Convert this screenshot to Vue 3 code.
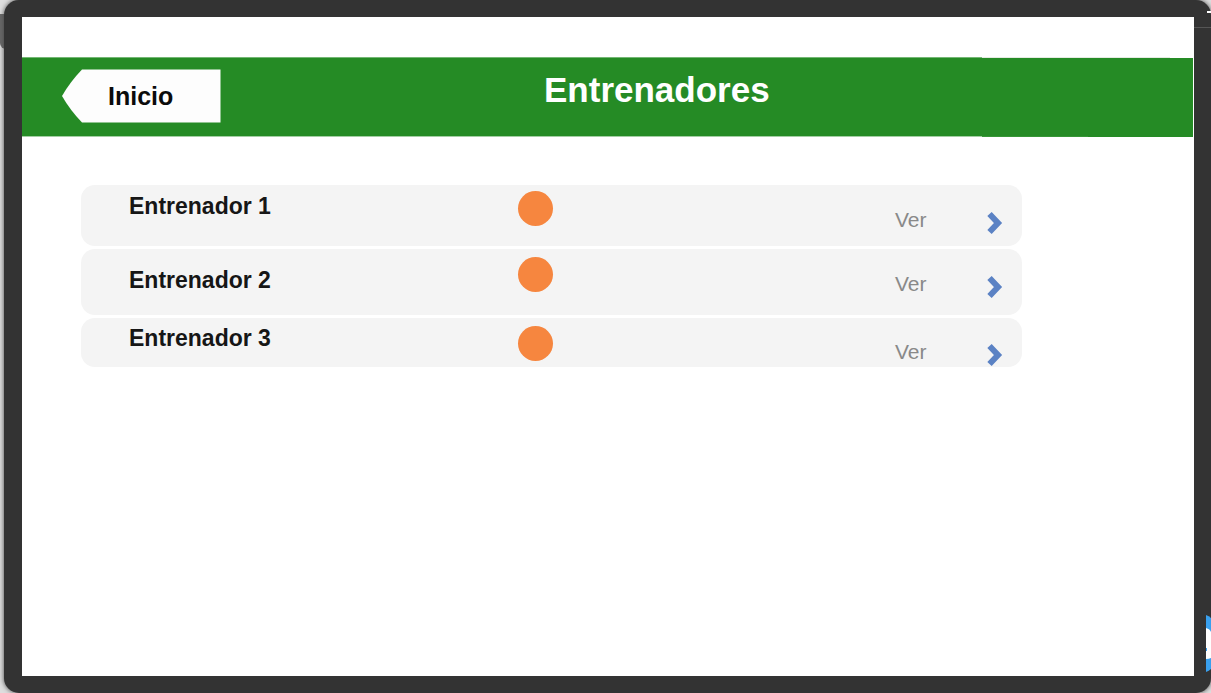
<script setup>
const trainers = [
  { id: 1, name: 'Entrenador 1', size: 'row-medium' },
  { id: 2, name: 'Entrenador 2', size: 'row-tall' },
  { id: 3, name: 'Entrenador 3', size: 'row-short' },
]
</script>

<template>
  <div class="desktop">
    <span class="side-tab"></span>
    <div class="device">
      <main class="screen">
        <header class="bar">
          <button class="back" type="button">
            <svg class="back-shape" viewBox="0 0 159 54" preserveAspectRatio="none" aria-hidden="true">
              <path d="M20 0.5H158.5V53.5H20Q8 41 0 27Q8 13 20 0.5Z" fill="#fdfdfd" />
            </svg>
            <span class="back-label">Inicio</span>
          </button>
          <h1 class="title">Entrenadores</h1>
        </header>
        <ul class="list">
          <li v-for="t in trainers" :key="t.id" class="row" :class="t.size">
            <span class="name">{{ t.name }}</span>
            <span class="dot"></span>
            <a class="view" href="#">
              <span class="view-label">Ver</span>
              <svg class="chevron" viewBox="0 0 18 24" aria-hidden="true">
                <path d="M3.5 3L12 12L3.5 21" fill="none" stroke="#5b82c4" stroke-width="6" />
              </svg>
            </a>
          </li>
        </ul>
      </main>
    </div>
    <span class="edge-line"></span>
    <span class="edge-mark"></span>
    <svg class="bubble" viewBox="0 0 5 57" aria-hidden="true">
      <path d="M0 0Q3 1 5 3V54Q3 56 0 57Z" fill="#39a0ee" />
      <path d="M0 13Q4 14 5 17V43Q3 44 0 44Z" fill="#fff" />
      <path d="M0 33H1V36H0Z" fill="#39a0ee" />
    </svg>
  </div>
</template>

<style>
body {
  margin: 0;
  background: #dedede;
}
</style>

<style scoped>
.desktop {
  position: relative;
  display: flex;
  box-sizing: border-box;
  min-height: 100vh;
  padding-left: 4px;
  overflow: hidden;
  font-family: "Liberation Sans", Arial, sans-serif;
}
.side-tab {
  position: absolute;
  left: 0;
  top: 14px;
  width: 8px;
  height: 35px;
  border-radius: 0 0 0 6px;
  background: #686868;
}
.device {
  position: relative;
  flex: 1;
  display: flex;
  box-sizing: border-box;
  padding: 17px 17px 17px 18px;
  border-radius: 15px;
  background: #333;
  box-shadow: 0 0 5px #444;
}
.screen {
  flex: 1;
  box-sizing: border-box;
  padding-top: 40px;
  background: #fff;
}
.bar {
  display: flex;
  align-items: flex-start;
  height: 80px;
  margin-right: 1px;
  background:
    linear-gradient(90deg, #74b774 82%, #e4ebe2 82% 98%, #fff 98%) 0 0 / 100% 1px no-repeat,
    linear-gradient(90deg, #a4cfa4 82%, #379637 82% 91%, #258b25 91%) 0 79px / 100% 1px no-repeat,
    #258b25;
}
.back {
  position: relative;
  width: 159px;
  height: 54px;
  margin: 12px 0 0 40px;
  padding: 0 0 0 46px;
  border: 0;
  background: none;
  color: #0b0b0b;
  font: bold 25px/54px "Liberation Sans", Arial, sans-serif;
  text-align: left;
}
.back-shape {
  position: absolute;
  inset: 0;
  width: 100%;
  height: 100%;
}
.back-label {
  position: relative;
}
.title {
  margin: 13px 0 0 323px;
  color: #fff;
  font-size: 35px;
  font-weight: bold;
  line-height: 40px;
}
.list {
  display: flex;
  flex-direction: column;
  gap: 3px;
  margin: 48px 172px 0 59px;
  padding: 0;
  list-style: none;
}
.row {
  display: grid;
  grid-template-columns: 437fr 377fr 127fr;
  align-items: start;
  border-radius: 14px;
  background: #f4f4f4;
}
.row-medium {
  height: 61px;
}
.row-tall {
  height: 66px;
}
.row-short {
  height: 49px;
}
.name {
  padding: 8px 0 0 48px;
  color: #161616;
  font-size: 23px;
  font-weight: bold;
  line-height: 26px;
}
.row-tall .name {
  padding-top: 18px;
}
.row-short .name {
  padding-top: 7px;
}
.dot {
  width: 35px;
  height: 35px;
  margin-top: 6px;
  border-radius: 50%;
  background: #f6863f;
}
.row-tall .dot,
.row-short .dot {
  margin-top: 8px;
}
.view {
  display: flex;
  justify-content: space-between;
  align-items: flex-start;
  padding: 23px 18px 0 0;
  color: #898989;
  font-size: 21px;
  line-height: 24px;
  text-decoration: none;
}
.row-short .view {
  padding-top: 22px;
}
.chevron {
  width: 18px;
  height: 24px;
  margin-top: 3px;
}
.edge-line {
  position: absolute;
  right: 0;
  top: 27px;
  width: 17px;
  height: 1px;
  background: #555;
}
.edge-mark {
  position: absolute;
  right: 0;
  top: 11px;
  width: 4px;
  height: 2px;
  background: #fff;
}
.bubble {
  position: absolute;
  right: 0;
  bottom: 21px;
  width: 5px;
  height: 57px;
}
</style>
